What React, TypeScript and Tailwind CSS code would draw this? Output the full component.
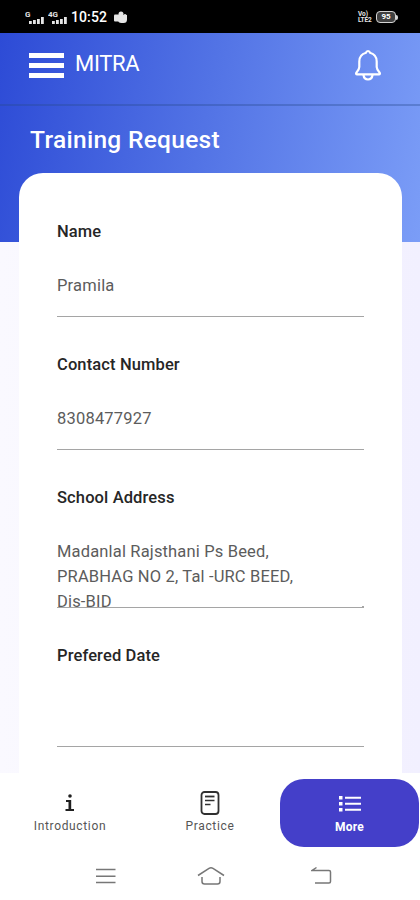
import type { ReactNode } from "react";

function Signal({ label, width }: { label: string; width: number }) {
  return (
    <svg width={width} height="15" viewBox={`0 0 ${width} 15`} fill="#e5e5e5">
      <text x="0" y="6.500" fontSize="8" fontWeight="700" fontFamily="Roboto, sans-serif">
        {label}
      </text>
      <rect x={width - 15} y="11" width="2.8" height="3" />
      <rect x={width - 11} y="10" width="2.8" height="4" />
      <rect x={width - 7} y="9" width="2.8" height="5" />
      <rect x={width - 3} y="7" width="2.8" height="7" />
    </svg>
  );
}

function StatusBar() {
  return (
    <div className="flex h-[33px] shrink-0 items-center justify-between bg-black pl-[25px] pr-[22px] pt-px text-white">
      <div className="flex items-center">
        <Signal label="G" width={19} />
        <span className="ml-1 flex">
          <Signal label="4G" width={19} />
        </span>
        <span className="ml-[4px] w-[36px] whitespace-nowrap text-[14px] font-medium leading-none tracking-[0.1px]">
          10:52
        </span>
        <svg className="ml-[7px]" width="13" height="13" viewBox="0 0 13 13" fill="#e5e5e5">
          <circle cx="7" cy="3" r="2.5" />
          <circle cx="11" cy="4.5" r="1.6" />
          <path d="M4 4h9v4.500a3.500 3.500 0 0 1-3.500 3.500h-2A3.500 3.500 0 0 1 4 8.500z" />
          <rect y="3.500" width="7" height="7" rx="1" />
        </svg>
      </div>
      <div className="flex items-center gap-[3px]">
        <div className="w-[15px] text-[6.500px] font-bold text-neutral-200">
          <div className="h-[6.500px] leading-[6.500px]">Vo)</div>
          <div className="h-[6.500px] whitespace-nowrap leading-[6.500px] tracking-[-0.2px]">LTE2</div>
        </div>
        <div className="flex items-center">
          <div className="flex h-[12px] w-[20px] items-center justify-center rounded-[4px] border-[1.500px] border-neutral-300 bg-neutral-700 text-[8px] font-bold leading-none">
            95
          </div>
          <div className="h-[5px] w-[2px] rounded-r bg-neutral-300" />
        </div>
      </div>
    </div>
  );
}

function Header() {
  return (
    <header className="flex h-[73px] shrink-0 items-start justify-between border-b-2 border-[#274a90]/35 pl-[29px] pr-[38px]">
      <div className="flex items-start">
        <div className="mt-[20px] flex w-[35px] flex-col gap-[5px]">
          <div className="h-[5px] bg-white" />
          <div className="h-[5px] bg-white" />
          <div className="h-[5px] bg-white" />
        </div>
        <span className="ml-[11px] mt-[18px] text-[22px] leading-[26px] tracking-[-0.3px] text-white">
          MITRA
        </span>
      </div>
      <svg
        className="mt-[16px]"
        width="28"
        height="32"
        viewBox="0 0 28 32"
        fill="none"
        stroke="white"
        strokeWidth="2.2"
        strokeLinecap="round"
        strokeLinejoin="round"
      >
        <path d="M14 2c-1.300 0-1.800.8-2 1.800C7.800 5 5.300 8 5.300 12.500v5.500c0 2-1.500 4-2.800 5.500-.8 1-.5 1.800.7 1.800h21.600c1.200 0 1.500-.8.7-1.800-1.300-1.500-2.800-3.500-2.800-5.500v-5.500c0-4.500-2.500-7.500-6.700-8.700-.2-1-.7-1.800-2-1.800z" />
        <path d="M9.500 26c.4 3 2 4.500 4.500 4.500s4.100-1.500 4.500-4.500" />
      </svg>
    </header>
  );
}

function Field({ label, children }: { label: string; children: ReactNode }) {
  return (
    <div className="mb-[35px]">
      <div className="mb-[9px] h-[25px] pt-px text-[16.500px] font-medium leading-6 tracking-[0.12px] text-[#262626]">
        {label}
      </div>
      {children}
    </div>
  );
}

function TabItem({ label, children }: { label: string; children: ReactNode }) {
  return (
    <div className="flex h-[68px] w-[140px] flex-col items-center pt-[11px]">
      <div className="flex h-[26px] items-center">{children}</div>
      <span className="text-[12px] leading-[20px] tracking-[0.65px] text-[#555555]">{label}</span>
    </div>
  );
}

function BottomBar() {
  return (
    <footer className="h-[127px] shrink-0 bg-white pt-[6px]">
      <nav className="flex">
        <TabItem label="Introduction">
          <svg width="12" height="18" viewBox="0 0 12 18" fill="#202020">
            <circle cx="6" cy="2" r="1.8" />
            <path d="M2 6h5.200v9H10v2H1.500v-2h3V8H2z" />
          </svg>
        </TabItem>
        <TabItem label="Practice">
          <svg width="20" height="24" viewBox="0 0 20 24" fill="none" stroke="#303030" strokeWidth="1.800">
            <rect x="1.500" y="1" width="17" height="22" rx="3" />
            <path d="M5 5.500h9.500" />
            <path d="M5 9.500h9.500M5 13.500h5.500" strokeWidth="1.300" />
          </svg>
        </TabItem>
        <div className="flex h-[68px] w-[139px] flex-col items-center rounded-[24px] bg-[#443fc9] pt-[12px] text-white">
          <div className="flex h-[26px] items-center">
            <svg width="22" height="16" viewBox="0 0 22 16" fill="white">
              <path d="M0 0h3.500v3.500H0zM0 6h3.500v3.500H0zM0 12h3.500v3.500H0zM6 .7h16v2H6zM6 6.700h16v2H6zM6 12.700h16v2H6z" />
            </svg>
          </div>
          <span className="text-[12px] font-bold leading-[20px] tracking-[0.2px]">More</span>
        </div>
      </nav>
      <div className="flex items-center pl-[96px] pt-[19px] text-[#777777]">
        <svg width="20" height="20" viewBox="0 0 20 20" fill="none" stroke="currentColor" strokeWidth="1.500">
          <path d="M0 3.500h19.500M0 10.300h19.500M0 16.500h19.500" />
        </svg>
        <svg className="ml-[81px]" width="28" height="20" viewBox="0 0 28 20" fill="none" stroke="currentColor" strokeWidth="1.500">
          <path d="M1 9.500 12 2.300q2-1.100 4 0L27 9.500M5 11v4.500q0 2.500 2.500 2.500h13q2.500 0 2.500-2.500V11" />
        </svg>
        <svg className="ml-[86px]" width="21" height="20" viewBox="0 0 21 20" fill="none" stroke="currentColor" strokeWidth="1.500">
          <path d="M5.500 1.500 1 4.500h17q1.500 0 1.500 1.500v9.500q0 1.500-1.500 1.500H4" />
        </svg>
      </div>
    </footer>
  );
}

export default function App() {
  const value = "border-b border-[#a5a5a5] text-[16.500px] text-[#5c5c5c]";

  return (
    <div className="flex h-[900px] w-[420px] flex-col overflow-hidden bg-linear-to-r from-[#faf9ff] to-[#f2f0ff] font-[Roboto,sans-serif]">
      <StatusBar />
      <div className="shrink-0 bg-[linear-gradient(100deg,#2d4bd6_0%,#5273e5_48%,#7b9df7_100%)]">
        <Header />
        <h1 className="h-[136px] pl-[30px] pt-[19px] text-[24.500px] font-medium leading-[30px] tracking-[0.3px] text-white">
          Training Request
        </h1>
      </div>

      {/* Form card, pulled up over the banner */}
      <main className="relative -mt-[69px] ml-[19px] h-[600px] w-[383px] shrink-0 overflow-hidden rounded-t-[24px] bg-white pl-[38px] pr-[38px] pt-[46px]">
        <Field label="Name">
          <div className={`${value} h-16 pt-[21px] leading-6 tracking-[0.2px]`}>Pramila</div>
        </Field>
        <Field label="Contact Number">
          <div className={`${value} h-16 pt-[21px] leading-6 tracking-[0.2px]`}>8308477927</div>
        </Field>
        <Field label="School Address">
          <div className={`${value} relative h-[89px] pt-[20px] leading-[25px] tracking-[0.16px]`}>
            Madanlal Rajsthani Ps Beed,
            <br />
            PRABHAG NO 2, Tal -URC BEED,
            <br />
            Dis-BID
            {/* Textarea resize grip */}
            <span className="absolute bottom-0 right-0 h-px w-[2px] bg-[#a5a5a5]" />
          </div>
        </Field>
        <Field label="Prefered Date">
          <div className={`${value} h-[70px]`} />
        </Field>
      </main>

      <BottomBar />
    </div>
  );
}
